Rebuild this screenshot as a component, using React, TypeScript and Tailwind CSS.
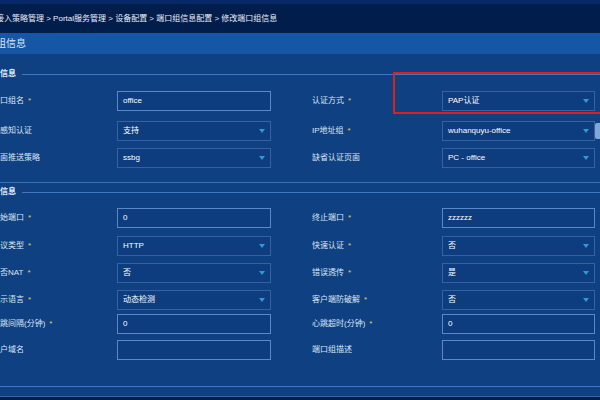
type Field = {
  label: string;
  req?: boolean;
  value: string;
  kind: "input" | "select";
};

type Row = { mt: string; left: Field; right: Field; extra?: boolean };

const basic: Row[] = [
  {
    mt: "mt-[11px]",
    left: { label: "端口组名", req: true, value: "office", kind: "input" },
    right: { label: "认证方式", req: true, value: "PAP认证", kind: "select" },
  },
  {
    mt: "mt-[10px]",
    left: { label: "无感知认证", value: "支持", kind: "select" },
    right: { label: "IP地址组", req: true, value: "wuhanquyu-office", kind: "select" },
    extra: true,
  },
  {
    mt: "mt-[7px]",
    left: { label: "页面推送策略", value: "ssbg", kind: "select" },
    right: { label: "缺省认证页面", value: "PC - office", kind: "select" },
  },
];

const advanced: Row[] = [
  {
    mt: "mt-[10px]",
    left: { label: "起始端口", req: true, value: "0", kind: "input" },
    right: { label: "终止端口", req: true, value: "zzzzzz", kind: "input" },
  },
  {
    mt: "mt-[8px]",
    left: { label: "协议类型", req: true, value: "HTTP", kind: "select" },
    right: { label: "快速认证", req: true, value: "否", kind: "select" },
  },
  {
    mt: "mt-[7px]",
    left: { label: "是否NAT", req: true, value: "否", kind: "select" },
    right: { label: "错误透传", req: true, value: "是", kind: "select" },
  },
  {
    mt: "mt-[7px]",
    left: { label: "提示语言", req: true, value: "动态检测", kind: "select" },
    right: { label: "客户端防破解", req: true, value: "否", kind: "select" },
  },
  {
    mt: "mt-[4px]",
    left: { label: "心跳间隔(分钟)", req: true, value: "0", kind: "input" },
    right: { label: "心跳超时(分钟)", req: true, value: "0", kind: "input" },
  },
  {
    mt: "mt-[6px]",
    left: { label: "用户域名", value: "", kind: "input" },
    right: { label: "端口组描述", value: "", kind: "input" },
  },
];

const Label = ({ f }: { f: Field }) => (
  <span className="whitespace-nowrap text-[#dce6f3]">
    {f.label}
    {f.req && <span className="ml-[4px] text-[#e8d24a]">*</span>}
  </span>
);

const Box = ({ f, w }: { f: Field; w: string }) => (
  <div
    className={`${w} h-[20px] shrink-0 flex items-center justify-between pl-[5px] pr-[5px] border ${
      f.kind === "input" ? "border-[#5b89c7]" : "border-[#36629f]"
    } bg-[#0d3d7e] text-white`}
  >
    <span>{f.value}</span>
    {f.kind === "select" && (
      <span className="w-0 h-0 border-l-[3.5px] border-r-[3.5px] border-t-[4px] border-l-transparent border-r-transparent border-t-[#2d9bd8]" />
    )}
  </div>
);

const FormRow = ({ row }: { row: Row }) => (
  <div className={`${row.mt} flex items-center h-[20px]`}>
    <div className="w-[125px] -ml-[8px] shrink-0">
      <Label f={row.left} />
    </div>
    <Box f={row.left} w="w-[154px]" />
    <div className="w-[130px] ml-[41px] shrink-0">
      <Label f={row.right} />
    </div>
    <Box f={row.right} w="w-[153px]" />
    {row.extra && <div className="w-[6px] h-[16px] shrink-0 rounded-l-[2px] bg-[#7fa8d8]" />}
  </div>
);

const SectionHead = ({ title, mt }: { title: string; mt: string }) => (
  <div className={`${mt} flex items-center h-[12px]`}>
    <span className="-ml-[16px] font-bold text-[#e3ebf7] whitespace-nowrap">{title}</span>
    <div className="ml-[6px] flex-1 h-px bg-[#3e78c2]" />
  </div>
);

export default function App() {
  return (
    <div className="w-[600px] h-[400px] overflow-hidden relative bg-[#0e4082] text-[8px] font-['Liberation_Sans','Noto_Sans_CJK_SC',sans-serif]">
      <div className="h-[4px] bg-[#07296a]" />
      <div className="h-[29px] bg-[#011d4b] flex items-center">
        <span className="-ml-[4px] whitespace-nowrap text-[#e8eef8]">
          接入策略管理 &gt; Portal服务管理 &gt; 设备配置 &gt; 端口组信息配置 &gt; 修改端口组信息
        </span>
      </div>
      <div className="h-[21px] bg-[#1657a5] flex items-center">
        <span className="-ml-[24px] text-[10px] whitespace-nowrap text-[#d8e5f6]">端口组信息</span>
      </div>

      <div className="pt-[14px]">
        <SectionHead title="基本信息" mt="mt-0" />
        {basic.map((r) => (
          <FormRow key={r.left.label} row={r} />
        ))}
        <div className="mt-[14px] h-px bg-[#3a72ba]" />
        <SectionHead title="高级信息" mt="mt-[3px]" />
        {advanced.map((r) => (
          <FormRow key={r.left.label} row={r} />
        ))}
        <div className="mt-[26px] h-px bg-[#3e78c2]" />
        <div className="h-[9px]" />
        <div className="h-px bg-[#2f66ad]" />
        <div className="h-[4px] bg-[#021d4a]" />
      </div>

      <div className="absolute left-[393px] top-[72px] w-[212px] h-[42px] border-2 border-[#e21d1d]" />
    </div>
  );
}
